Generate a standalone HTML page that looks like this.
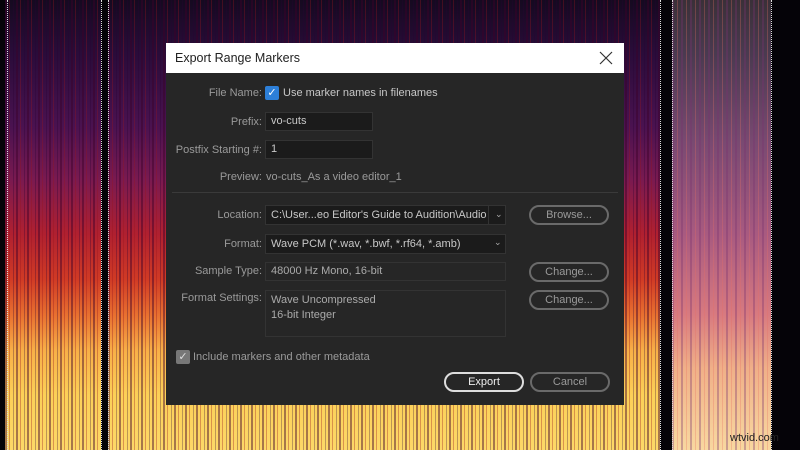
<!DOCTYPE html>
<html><head><style>
*{margin:0;padding:0;box-sizing:border-box}
body{width:800px;height:450px;overflow:hidden;background:#050308;position:relative;font-family:"Liberation Sans",sans-serif;font-size:11.5px}
.spec{position:absolute;top:0;height:450px;background:linear-gradient(#150a20 0%,#2a0c3a 12%,#4a1250 28%,#7a1a50 40%,#b02030 52%,#d03a25 62%,#e87030 70%,#f8b048 78%,#fcd058 88%,#fdd868 100%)}
.spec::after{content:"";position:absolute;inset:0;background:repeating-linear-gradient(90deg,rgba(60,0,40,.45) 0 2px,transparent 2px 4px,rgba(150,20,30,.35) 4px 5px,transparent 5px 8px,rgba(40,0,50,.3) 8px 9px,transparent 9px 11px)}
.pink{position:absolute;left:672px;width:99px;top:0;height:450px;background:linear-gradient(#3a3038 0%,#4a3a50 12%,#7a4a72 32%,#a85a80 52%,#d87a80 70%,#f0b088 82%,#f8d8a0 100%)}
.pink::after{content:"";position:absolute;inset:0;background:repeating-linear-gradient(90deg,rgba(120,50,110,.35) 0 2px,transparent 2px 5px,rgba(230,110,100,.3) 5px 6px,transparent 6px 9px)}
.dot{position:absolute;top:0;height:450px;border-left:1px dotted #ddd}
.dlg{position:absolute;left:166px;top:43px;width:458px;height:362px;background:#262626}
.title{height:30px;background:#fff;color:#222;font-size:12.5px;padding:8px 0 0 9px;position:relative}
.x{position:absolute;right:11px;top:8px}
.lbl{position:absolute;right:362px;color:#9a9a9a;text-align:right;white-space:nowrap;font-size:11px}
.in{position:absolute;background:#1b1b1b;border:1px solid #333;color:#c8c8c8;padding:2px 5px;white-space:nowrap;overflow:hidden;font-size:11px}
.btn{position:absolute;border:2px solid #6a6a6a;border-radius:10px;color:#9a9a9a;text-align:center;line-height:16px;width:80px;height:20px;font-size:11px}
.t{position:absolute;color:#c8c8c8;white-space:nowrap;font-size:11px}
.chev{position:absolute;color:#aaa;font-size:9px}
</style></head><body>
<div class="spec" style="left:5px;width:96px"></div>
<div class="spec" style="left:108px;width:552px"></div>
<div class="pink"></div>
<div class="dot" style="left:7px"></div>
<div class="dot" style="left:101px"></div>
<div class="dot" style="left:108px"></div>
<div class="dot" style="left:660px"></div>
<div class="dot" style="left:672px"></div>
<div class="dot" style="left:771px"></div>
<div style="position:absolute;left:730px;top:432px;color:#222;font-size:11px">wtvid.com</div>
<div class="dlg">
<div class="title">Export Range Markers<svg class="x" width="14" height="14" viewBox="0 0 14 14"><path d="M1 1L13 13M13 1L1 13" stroke="#333" stroke-width="1.2"/></svg></div>
<div class="lbl" style="top:44px">File Name:</div>
<div style="position:absolute;left:99px;top:43px;width:14px;height:14px;background:#2d7fd8;border-radius:2px;color:#fff;font-size:11px;line-height:14px;text-align:center">✓</div>
<div class="t" style="left:117px;top:44px">Use marker names in filenames</div>
<div class="lbl" style="top:73px">Prefix:</div>
<div class="in" style="left:99px;top:69px;width:108px;height:19px">vo-cuts</div>
<div class="lbl" style="top:101px">Postfix Starting #:</div>
<div class="in" style="left:99px;top:97px;width:108px;height:19px">1</div>
<div class="lbl" style="top:128px">Preview:</div>
<div class="t" style="left:100px;top:128px;color:#9a9a9a">vo-cuts_As a video editor_1</div>
<div style="position:absolute;left:6px;top:149px;width:446px;height:1px;background:#3a3a3a"></div>
<div class="lbl" style="top:166px">Location:</div>
<div class="in" style="left:99px;top:162px;width:241px;height:20px;padding-top:3px"><div style="width:219px;overflow:hidden">C:\User...eo Editor's Guide to Audition\Audio</div></div>
<div style="position:absolute;left:322px;top:163px;width:1px;height:18px;background:#333"></div>
<div class="chev" style="left:329px;top:166px">&#8964;</div>
<div class="btn" style="left:363px;top:162px">Browse...</div>
<div class="lbl" style="top:195px">Format:</div>
<div class="in" style="left:99px;top:191px;width:241px;height:20px;padding-top:3px">Wave PCM (*.wav, *.bwf, *.rf64, *.amb)</div>
<div class="chev" style="left:328px;top:194px">&#8964;</div>
<div class="lbl" style="top:222px">Sample Type:</div>
<div class="in" style="left:99px;top:219px;width:241px;height:19px;background:#262626;color:#aaa">48000 Hz Mono, 16-bit</div>
<div class="btn" style="left:363px;top:219px">Change...</div>
<div class="lbl" style="top:249px">Format Settings:</div>
<div class="in" style="left:99px;top:247px;width:241px;height:47px;background:#262626;color:#aaa;line-height:15px">Wave Uncompressed<br>16-bit Integer</div>
<div class="btn" style="left:363px;top:247px">Change...</div>
<div style="position:absolute;left:10px;top:307px;width:14px;height:14px;background:#777;border-radius:2px;color:#ddd;font-size:11px;line-height:14px;text-align:center">✓</div>
<div class="t" style="left:27px;top:308px;color:#9a9a9a">Include markers and other metadata</div>
<div class="btn" style="left:278px;top:329px;border-color:#ddd;color:#eee">Export</div>
<div class="btn" style="left:364px;top:329px">Cancel</div>
</div>
</body></html>
